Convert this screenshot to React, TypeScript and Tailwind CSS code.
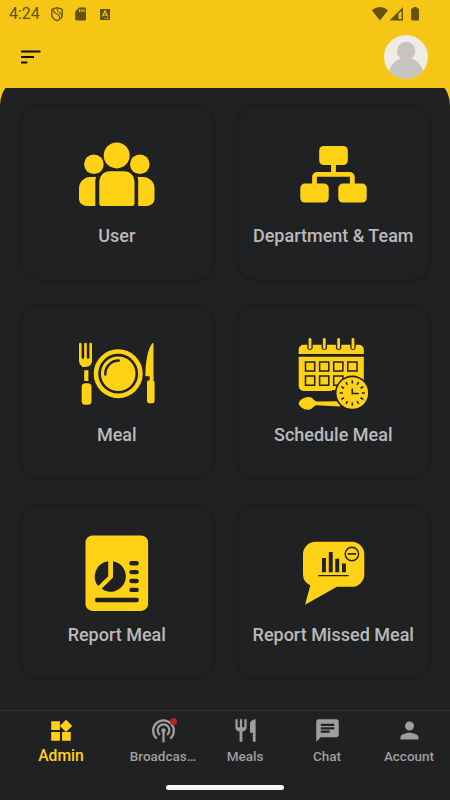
import React from 'react'

const DARK = '#202123'
const YELLOW = '#ffd216'

const UserIcon = () => (
    <svg width="80" height="80" viewBox="77 136 80 80" fill={YELLOW}>
        <circle cx="116.7" cy="155.4" r="13" />
        <circle cx="93.9" cy="164.3" r="9.8" />
        <circle cx="139.8" cy="164.3" r="9.8" />
        <path d="M109.3 171.2h15.2a10 10 0 0 1 10 10v22.5a2.3 2.3 0 0 1-2.3 2.3h-30.6a2.3 2.3 0 0 1-2.3-2.3v-22.5a10 10 0 0 1 10-10z" />
        <path d="M96.1 177h-5.6a11.5 11.5 0 0 0-11.5 11.5v10.2a7.3 7.3 0 0 0 7.3 7.3h9v-25q0-2 .8-4z" />
        <path d="M137.5 177h5.5a11.5 11.5 0 0 1 11.5 11.5v10.2a7.3 7.3 0 0 1-7.3 7.3h-9v-25q0-2-.7-4z" />
    </svg>
)

const DepartmentIcon = () => (
    <svg width="80" height="80" viewBox="293 136 80 80" fill={YELLOW}>
        <rect x="319.2" y="146" width="28.6" height="19" rx="4.5" />
        <rect x="300.3" y="183.6" width="28.4" height="19" rx="4.5" />
        <rect x="338.3" y="183.6" width="28.4" height="19" rx="4.5" />
        <path d="M333.5 163v11.5M314.5 185v-8a2.6 2.6 0 0 1 2.6-2.6h32.6a2.6 2.6 0 0 1 2.6 2.6v8" fill="none" stroke={YELLOW} strokeWidth="4.8" />
    </svg>
)

const MealIcon = () => (
    <svg width="80" height="80" viewBox="77 336 80 80" fill={YELLOW}>
        <path d="M79 344a1.3 1.3 0 0 1 2.6 0v13.5a1.3 1.3 0 0 0 2.6 0V344a1.3 1.3 0 0 1 2.6 0v13.5a1.3 1.3 0 0 0 2.6 0V344a1.3 1.3 0 0 1 2.6 0v17a6.2 6.2 0 0 1-3.2 5.3q-1.5.8-4.3.8t-2.7-.9A6.2 6.2 0 0 1 79 361z" />
        <path d="M84.2 370.2h4.2V381h-4.2z" />
        <rect x="81.7" y="383.3" width="9.8" height="21.5" rx="3.6" />
        <circle cx="118.2" cy="373.7" r="24.5" />
        <circle cx="118.2" cy="373.7" r="18.6" fill="none" stroke={DARK} strokeWidth="2.6" />
        <path d="M105.3 374.5a13.5 13.5 0 0 1 13.5-14" fill="none" stroke={DARK} strokeWidth="2.4" strokeLinecap="round" />
        <path d="M152.4 343.2q1.1-.4 1.1 1V378h-3.7v-1.7h-4.5q.5-25 7.1-33.1z" />
        <path d="M149.7 377h3.8v4h-3.8z" />
        <rect x="147" y="380.3" width="7.6" height="23" rx="2.2" />
    </svg>
)

const ScheduleIcon = () => (
    <svg width="80" height="80" viewBox="293 336 80 80" fill={YELLOW}>
        <path d="M298.7 354v-4.2a5 5 0 0 1 5-5h55.1a5 5 0 0 1 5 5v4.2z" />
        <path d="M298.7 356.7h65.1V390h-32v1h-28.1a5 5 0 0 1-5-5z" />
        {[310, 324.3, 338.6, 353].map((x) => (
            <g key={x}>
                <path d={`M${x - 2.7} 343.5v3.8a2.7 2.7 0 0 0 5.4 0v-3.8z`} fill={DARK} />
                <rect x={x - 1.4} y="338" width="2.8" height="11.2" rx="1.4" />
            </g>
        ))}
        <g fill="none" stroke={DARK} strokeWidth="1.5">
            <path d="M305.5 361.9h9.2v9.2h-9.2zM319.6 361.9h9.2v9.2h-9.2zM333.7 361.9h9.2v9.2h-9.2zM347.8 361.9h9.2v9.2h-9.2z" />
            <path d="M305.5 376h9.2v9.2h-9.2zM319.6 376h9.2v9.2h-9.2zM333.7 376h9.2v9.2h-9.2z" />
        </g>
        <path d="M298.5 403.4q2.2-5.7 9.5-6.400c5-.3 5 3.400 8.500 4.500L340 401.200v5.200l-23.500-1.200c-3.500.6-3.500 4.200-8.500 4.600q-7.300-.5-9.500-6.400z" />
        <circle cx="352.3" cy="393" r="17.4" fill={DARK} />
        <circle cx="352.3" cy="393" r="15.8" />
        <g stroke={DARK} strokeWidth="1.5">
            {[0, 30, 60, 90, 120, 150, 180, 210, 240, 270, 300, 330].map((a) => (
                <path key={a} d="M352.3 380.3v3.2" transform={`rotate(${a} 352.3 393)`} />
            ))}
            <path d="M352.3 388.5v5h6.5" fill="none" strokeWidth="1.6" />
        </g>
    </svg>
)

const ReportIcon = () => (
    <svg width="80" height="80" viewBox="77 535 80 80" fill={YELLOW}>
        <rect x="85.5" y="535.5" width="62.6" height="75.4" rx="7" />
        <g fill={DARK}>
            <path d="M108.2 561.3v14.9l-10 9.9a15.3 15.3 0 0 1 10-24.8z" />
            <path d="M113 561.3a15.3 15.3 0 1 1-11.4 27.5l11.4-11.3z" />
            <rect x="129.3" y="561.1" width="9.5" height="4.4" rx="2.2" />
            <rect x="129.3" y="569.9" width="9.5" height="4.4" rx="2.2" />
            <rect x="129.3" y="578.8" width="9.5" height="4.4" rx="2.2" />
            <rect x="129.3" y="587.7" width="9.5" height="4.4" rx="2.2" />
            <rect x="94.9" y="597.8" width="44" height="4.4" rx="2.2" />
        </g>
    </svg>
)

const MissedIcon = () => (
    <svg width="80" height="80" viewBox="293 535 80 80" fill={YELLOW}>
        <path d="M315.5 541.8h36.3a12.5 12.5 0 0 1 12.5 12.5v20a12.5 12.5 0 0 1-12.5 12.5H337L305 604.8l5.3-19.3q-7.3-3.5-7.3-11.2v-20a12.5 12.5 0 0 1 12.5-12.5z" />
        <g fill={DARK}>
            <path d="M322 558h3.9v14.2H322zM328.8 552h3.9v20.2h-3.9zM335.3 558.8h3.9v13.4h-3.9zM342 563.5h3.9v8.7H342zM318.3 575h30.4v1.2h-30.4z" />
        </g>
        <circle cx="351.9" cy="554" r="6.7" fill="none" stroke={DARK} strokeWidth="1.4" />
        <path d="M347.7 553.1h8.4v1.7h-8.4z" fill={DARK} />
    </svg>
)

const cards = [
    { label: 'User', icon: <UserIcon /> },
    { label: 'Department & Team', icon: <DepartmentIcon /> },
    { label: 'Meal', icon: <MealIcon /> },
    { label: 'Schedule Meal', icon: <ScheduleIcon /> },
    { label: 'Report Meal', icon: <ReportIcon /> },
    { label: 'Report Missed Meal', icon: <MissedIcon /> }
]

const tabs = [
    { label: 'Broadcas…', d: '', badge: true },
    { label: 'Meals', d: 'M11 9H9V2H7v7H5V2H3v7c0 2.12 1.66 3.84 3.75 3.97V22h2.5v-9.03C11.34 12.84 13 11.12 13 9V2h-2v7zm5-3v8h2.5v8H21V2c-2.76 0-5 2.24-5 4z' },
    { label: 'Chat', d: 'M20 2H4c-1.1 0-1.99.9-1.99 2L2 22l4-4h14c1.1 0 2-.9 2-2V4c0-1.1-.9-2-2-2zM6 9h12v2H6V9zm8 5H6v-2h8v2zm4-6H6V6h12v2z' },
    { label: 'Account', d: 'M12 12c2.21 0 4-1.79 4-4s-1.79-4-4-4-4 1.79-4 4 1.79 4 4 4zm0 2c-2.67 0-8 1.34-8 4v2h16v-2c0-2.66-5.33-4-8-4z' }
]

const TabIcon = ({ d }: { d: string }) => (
    <svg width="27" height="27" viewBox="0 0 24 24" fill="currentColor">
        {d ? <path d={d} /> : (
            <g fill="none" stroke="currentColor" strokeWidth="2">
                <path d="M6 19.2a9.200 9.200 0 1 1 12 0" />
                <path d="M8.900 15.900a5.200 5.200 0 1 1 6.200 0" />
                <circle cx="12" cy="12" r="2" fill="currentColor" stroke="none" />
                <path d="M12 12v10.500" />
            </g>
        )}
    </svg>
)

const StatusBar = () => (
    <div className="flex h-[27px] items-center justify-between text-[#66520b]">
        <div className="flex items-center pl-[9px]">
            <span className="w-[41px] text-[16px] leading-[27px]">4:24</span>
            <svg width="62" height="16" viewBox="50 5 62 16" fill="currentColor">
                <path d="M57 6.7l5.2 1.7v5q0 4-5.2 6.2-5.2-2.2-5.2-6.2v-5z" fill="none" stroke="currentColor" strokeWidth="1.4" strokeLinejoin="round" />
                <path d="M53.5 8.500q-.3 2.800 2.700 4.100 4 1.700 3.200 4.700M56.800 7.500q.2 2.800 2.400 3.700 1.800 1 2.300 3" fill="none" stroke="currentColor" strokeWidth="1.1" />
                <path d="M79.2 6.5h5.5q1.3 0 1.3 1.3v10.4q0 1.3-1.3 1.3h-8.2q-1.3 0-1.3-1.3v-7.7z" />
                <path d="M79 8.300h1.200v2.800H79zM81.200 8.300h1.200v2.800h-1.200zM83.400 8.300h1.200v2.800h-1.200z" fill="#f5c714" />
                <path d="M100 8h10v11h-10z" />
                <path d="M102.300 15.500l2.700-5.700 2.700 5.700M103.300 14h3.400M104.500 17.200h1M106.500 17.200h2" fill="none" stroke="#f5c714" strokeWidth="1.1" />
            </svg>
        </div>
        <svg className="mr-[29px]" width="50" height="16" viewBox="371 5 50 16" fill="currentColor">
            <path d="M371.8 9.2q8.1-6.3 16.2 0l-8.1 10.3z" />
            <path d="M403 6v13.5h-13.5zM398.5 12.7v5.3h3V9.7z" fillRule="evenodd" />
            <path d="M413.5 6h3.2v1.2h1.2q1.1 0 1.1 1.1v10.1q0 1.1-1.1 1.1h-5.7q-1.1 0-1.1-1.1V8.300q0-1.1 1.1-1.1h1.3z" />
        </svg>
    </div>
)

export default function App() {
    return (
        <div className="flex h-[800px] w-[450px] flex-col overflow-hidden bg-[#f5c714] font-[Roboto,sans-serif]">
            <header className="h-[88px] shrink-0">
                <StatusBar />
                <div className="flex items-start justify-between pt-2 pr-[22px] pl-[21px]">
                    <svg className="mt-[15px]" width="20" height="14" viewBox="0 0 20 14" fill="#0e1021">
                        <path d="M0 .4h19.5v2H0zM0 6h13v2H0zM0 11.5h6.3v2H0z" />
                    </svg>
                    <svg width="44" height="44" viewBox="0 0 44 44">
                        <defs>
                            <clipPath id="avatar"><circle cx="22" cy="22" r="22" /></clipPath>
                        </defs>
                        <g clipPath="url(#avatar)">
                            <path d="M0 0h44v44H0z" fill="#efebe6" />
                            <circle cx="22.2" cy="16" r="9.2" fill="#c7c3bd" />
                            <path d="M4.500 38c2.500-9 7.500-13.500 13.500-14.500q4.200 1.500 8.400 0c6 1 11 5.500 13.500 14.500v6H4.500z" fill="#c7c3bd" />
                        </g>
                    </svg>
                </div>
            </header>

            <main className="h-[622px] shrink-0 overflow-hidden">
                <div className="-mt-3 h-[634px] rounded-t-[29px] bg-[#202123] px-[22px] pt-[30.5px]">
                    <div className="grid grid-cols-2 gap-x-[27px] gap-y-[27.6px]">
                        {cards.map((card) => (
                            <div key={card.label} className="flex h-[172px] flex-col items-center rounded-[16px] bg-[#202123] pt-[29.5px] shadow-[0_0_5px_1px_rgba(0,0,0,0.2)]">
                                {card.icon}
                                <span className="mt-[8.6px] text-[18px] leading-[22px] font-medium whitespace-nowrap text-[#bababa]">{card.label}</span>
                            </div>
                        ))}
                    </div>
                </div>
            </main>

            <nav className="flex flex-1 flex-col items-center border-t border-[#3a321d] bg-[#202123]">
                <div className="flex h-[73px] w-full">
                    <div className="flex w-[122px] flex-col items-center pt-[7px] text-[#ffd216]">
                        <svg width="26" height="26" viewBox="0 0 24 24" fill="currentColor">
                            <path d="M13 13v8h8v-8h-8zM3 21h8v-8H3v8zM3 3v8h8V3H3zm13.66-1.31L11 7.34 16.66 13l5.66-5.66-5.66-5.65z" />
                        </svg>
                        <span className="text-[15.7px] leading-6 font-medium">Admin</span>
                    </div>
                    {tabs.map((tab) => (
                        <div key={tab.label} className="flex w-[82px] flex-col items-center pt-[6px] text-[#9e9e9e]">
                            <div className="relative">
                                <TabIcon d={tab.d} />
                                {tab.badge && <span className="absolute top-[1px] right-0 size-[7px] rounded-full bg-[#b3261e]" />}
                            </div>
                            <span className="text-[13.5px] leading-[25px] font-medium">{tab.label}</span>
                        </div>
                    ))}
                </div>
                <div className="mt-px h-[5px] w-[118px] rounded-full bg-[#f4f4f4]" />
            </nav>
        </div>
    )
}
